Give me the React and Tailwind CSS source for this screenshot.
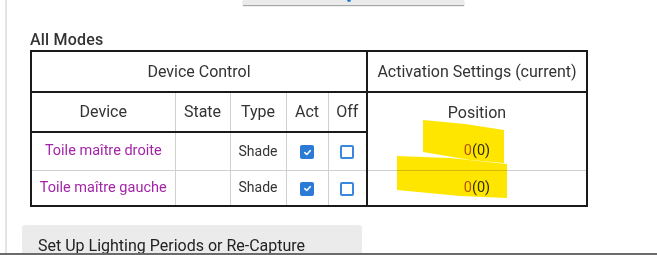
import React from "react";

function Check({ on }) {
  if (on) {
    return (
      <span className="inline-flex w-[14px] h-[14px] rounded-[2px] bg-[#2b7bd6] items-center justify-center align-middle">
        <svg width="9" height="9" viewBox="0 0 10 10">
          <path d="M2 5.2 L4.2 7.2 L8 3" stroke="white" strokeWidth="1.8" fill="none" strokeLinecap="round" strokeLinejoin="round" />
        </svg>
      </span>
    );
  }
  return <span className="inline-block w-[14px] h-[14px] rounded-[2px] border-2 border-[#3a88dc] bg-white align-middle" />;
}

export default function App() {
  const rows = ["Toile maître droite", "Toile maître gauche"];
  return (
    <div className="relative w-[657px] h-[255px] overflow-hidden bg-white font-['Roboto',sans-serif] text-[#333]">
      <div className="ml-[5px] h-full border-l-2 border-[#e4e4e4] flex flex-col">
        <div className="ml-[236px] w-[221px] h-[11px] bg-[#ebebeb] shadow-[0_1px_1px_rgba(0,0,0,0.35)] relative">
          <span className="absolute left-[104px] top-0 w-[4px] h-[2px] rounded-b bg-[#2b7bd6]" />
        </div>
        <div className="ml-[23px] mt-[25px] text-[16px] font-medium leading-[19px] tracking-[0.2px] text-[#333]">All Modes</div>
        <table className="ml-[23px] mt-[1px] border-collapse table-fixed w-[556px] border-2 border-[#1a1a1a] text-[16px]">
          <colgroup>
            <col className="w-[144px]" />
            <col className="w-[55px]" />
            <col className="w-[56px]" />
            <col className="w-[42px]" />
            <col className="w-[39px]" />
            <col className="w-[220px]" />
          </colgroup>
          <tbody>
            <tr className="h-[41px]">
              <td colSpan={5} className="text-center border-b-2 border-[#1a1a1a] p-0">Device Control</td>
              <td className="text-center border-l-2 border-b-2 border-[#1a1a1a] p-0">Activation Settings (current)</td>
            </tr>
            <tr className="h-[40px]">
              <td className="text-center border-r border-[#d0d0d0] border-b-2 border-b-[#1a1a1a] p-0">Device</td>
              <td className="text-center border-r border-[#d0d0d0] border-b-2 border-b-[#1a1a1a] p-0">State</td>
              <td className="text-center border-r border-[#d0d0d0] border-b-2 border-b-[#1a1a1a] p-0">Type</td>
              <td className="text-center border-r border-[#d0d0d0] border-b-2 border-b-[#1a1a1a] p-0">Act</td>
              <td className="text-center border-b-2 border-b-[#1a1a1a] p-0">Off</td>
              <td className="text-center border-l-2 border-[#1a1a1a] p-0">Position</td>
            </tr>
            {rows.map((name, i) => (
              <tr key={name} className={i === 0 ? "h-[38px]" : "h-[36px]"}>
                <td className={"text-center text-[14.5px] text-[#a424a8] border-r border-[#d0d0d0] p-0 " + (i === 0 ? "border-b" : "")}>{name}</td>
                <td className={"border-r border-[#d0d0d0] p-0 " + (i === 0 ? "border-b" : "")}></td>
                <td className={"text-center text-[14px] border-r border-[#d0d0d0] p-0 " + (i === 0 ? "border-b" : "")}>Shade</td>
                <td className={"text-center border-r border-[#d0d0d0] p-0 " + (i === 0 ? "border-b" : "")}><Check on /></td>
                <td className={"text-center border-[#d0d0d0] p-0 " + (i === 0 ? "border-b" : "")}><Check /></td>
                <td className={"text-center text-[14.5px] border-l-2 border-l-[#1a1a1a] border-[#d0d0d0] p-0 " + (i === 0 ? "border-b" : "")}>
                  <span className="text-[#b85c00]">0</span>(0)
                </td>
              </tr>
            ))}
          </tbody>
        </table>
        <div className="ml-[15px] mt-[18px] w-[340px] h-[40px] bg-[#ebebeb] rounded-t-[3px] pl-[16px] pt-[11px] text-[16px] leading-[19px] text-[#222]">
          Set Up Lighting Periods or Re-Capture
        </div>
      </div>
      <svg className="absolute left-0 top-0 mix-blend-multiply pointer-events-none" width="657" height="255">
        <polygon points="423,120 465,124 504,130 504,163 470,160 423,152" fill="#ffe600" />
        <polygon points="397,156 450,158 507,164 507,198 460,196 397,190" fill="#ffe600" />
      </svg>
      <div className="absolute left-0 right-0 bottom-0 h-[2px] bg-[#6b6b6b]" />
    </div>
  );
}
